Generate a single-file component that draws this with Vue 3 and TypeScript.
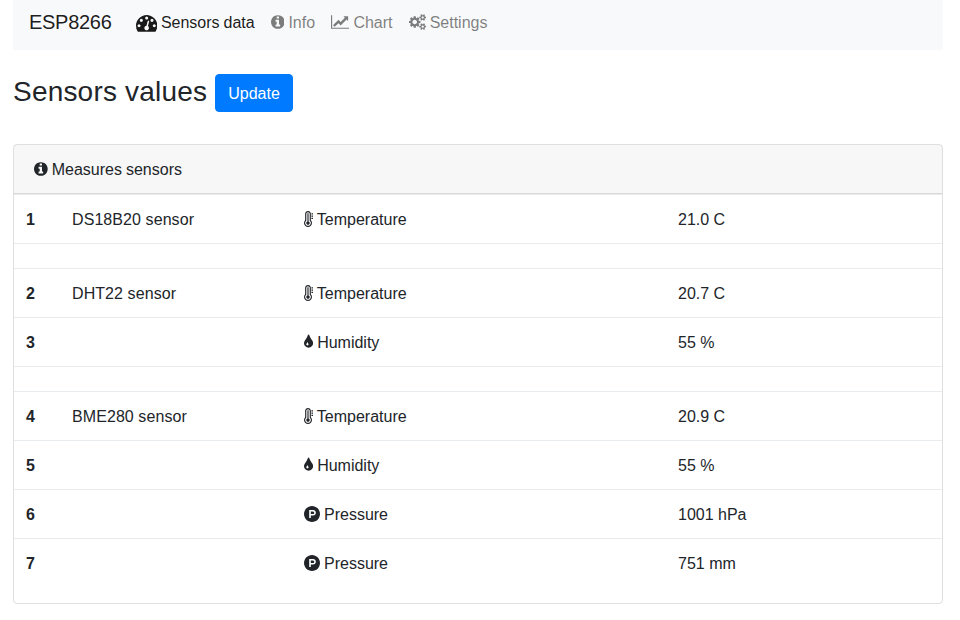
<script setup lang="ts">
interface Icon {
  width: number
  path: string
}

interface Row {
  index?: number
  sensor?: string
  icon?: string
  measure?: string
  value?: string
}

const icons: Record<string, Icon> = {
  tachometer: {
    width: 1792,
    path: 'M384 1152q0-53-37.5-90.5t-90.5-37.5-90.5 37.5-37.5 90.5 37.5 90.5 90.5 37.5 90.5-37.5 37.5-90.5zm192-448q0-53-37.5-90.5t-90.5-37.5-90.5 37.5-37.5 90.5 37.5 90.5 90.5 37.5 90.5-37.5 37.5-90.5zm428 481l101-382q6-26-7.5-48.5t-38.5-29.5-48 6.5-30 39.5l-101 382q-60 5-107 43.5t-63 98.5q-20 77 20 146t117 89 146-20 89-117q16-60-6-117t-72-91zm660-33q0-53-37.5-90.5t-90.5-37.5-90.5 37.5-37.5 90.5 37.5 90.5 90.5 37.5 90.5-37.5 37.5-90.5zm-640-640q0-53-37.5-90.5t-90.5-37.5-90.5 37.5-37.5 90.5 37.5 90.5 90.5 37.5 90.5-37.5 37.5-90.5zm448 192q0-53-37.5-90.5t-90.5-37.5-90.5 37.5-37.5 90.5 37.5 90.5 90.5 37.5 90.5-37.5 37.5-90.5zm320 448q0 261-141 483-19 29-54 29h-1402q-35 0-54-29-141-221-141-483 0-182 71-348t191-286 286-191 348-71 348 71 286 191 191 286 71 348z',
  },
  info: {
    width: 1536,
    path: 'M1024 1376v-160q0-14-9-23t-23-9h-96v-512q0-14-9-23t-23-9h-320q-14 0-23 9t-9 23v160q0 14 9 23t23 9h96v320h-96q-14 0-23 9t-9 23v160q0 14 9 23t23 9h448q14 0 23-9t9-23zm-128-896v-160q0-14-9-23t-23-9h-192q-14 0-23 9t-9 23v160q0 14 9 23t23 9h192q14 0 23-9t9-23zm640 416q0 209-103 385.5t-279.5 279.5-385.5 103-385.5-103-279.5-279.5-103-385.5 103-385.5 279.5-279.5 385.5-103 385.5 103 279.5 279.5 103 385.5z',
  },
  chart: {
    width: 2048,
    path: 'M2048 1536v128h-2048v-1536h128v1408h1920zm-128-1248v435q0 21-19.5 29.5t-35.5-7.5l-121-121-633 633q-10 10-23 10t-23-10l-233-233-416 416-192-192 585-585q10-10 23-10t23 10l233 233 464-464-121-121q-16-16-7.5-35.5t29.5-19.5h435q14 0 23 9t9 23z',
  },
  cogs: {
    width: 1920,
    path: 'M896 896q0-106-75-181t-181-75-181 75-75 181 75 181 181 75 181-75 75-181zm768 512q0-52-38-90t-90-38-90 38-38 90q0 53 37.5 90.5t90.5 37.5 90.5-37.5 37.5-90.5zm0-1024q0-52-38-90t-90-38-90 38-38 90q0 53 37.5 90.5t90.5 37.5 90.5-37.5 37.5-90.5zm-384 421v185q0 10-7 19.5t-16 10.5l-155 24q-11 35-32 76 34 48 90 115 7 11 7 20 0 12-7 19-23 30-82.5 89.5t-78.5 59.5q-11 0-21-7l-115-90q-37 19-77 31-11 108-23 155-7 24-30 24h-186q-11 0-20-7.5t-10-17.5l-23-153q-34-10-75-31l-118 89q-7 7-20 7-11 0-21-8-144-133-144-160 0-9 7-19 10-14 41-53t47-61q-23-44-35-82l-152-24q-10-1-17-9.5t-7-19.5v-185q0-10 7-19.5t16-10.5l155-24q11-35 32-76-34-48-90-115-7-11-7-20 0-12 7-20 22-30 82-89t79-59q11 0 21 7l115 90q34-18 77-32 11-108 23-154 7-24 30-24h186q11 0 20 7.5t10 17.5l23 153q34 10 75 31l118-89q8-7 20-7 11 0 21 8 144 133 144 160 0 8-7 19-12 16-42 54t-45 60q23 48 34 82l152 23q10 2 17 10.5t7 19.5zm640 533v140q0 16-149 31-12 27-30 52 51 113 51 138 0 4-4 7-122 71-124 71-8 0-46-47t-52-68q-20 2-30 2t-30-2q-14 21-52 68t-46 47q-2 0-124-71-4-3-4-7 0-25 51-138-18-25-30-52-149-15-149-31v-140q0-16 149-31 13-29 30-52-51-113-51-138 0-4 4-7 4-2 35-20t59-34 30-16q8 0 46 46.5t52 67.5q20-2 30-2t30 2q51-71 92-112l6-2q4 0 124 70 4 3 4 7 0 25-51 138 17 23 30 52 149 15 149 31zm0-1024v140q0 16-149 31-12 27-30 52 51 113 51 138 0 4-4 7-122 71-124 71-8 0-46-47t-52-68q-20 2-30 2t-30-2q-14 21-52 68t-46 47q-2 0-124-71-4-3-4-7 0-25 51-138-18-25-30-52-149-15-149-31v-140q0-16 149-31 13-29 30-52-51-113-51-138 0-4 4-7 4-2 35-20t59-34 30-16q8 0 46 46.5t52 67.5q20-2 30-2t30 2q51-71 92-112l6-2q4 0 124 70 4 3 4 7 0 25-51 138 17 23 30 52 149 15 149 31z',
  },
  thermometer: {
    width: 1024,
    path: 'M640 1344q0 80-56 136t-136 56-136-56-56-136q0-60 35-110t93-71v-907h128v907q58 21 93 71t35 110zm128 0q0-77-34-144t-94-112v-768q0-80-56-136t-136-56-136 56-56 136v768q-60 45-94 112t-34 144q0 133 93.5 226.5t226.5 93.5 226.5-93.5 93.5-226.5zm128 0q0 185-131.5 316.5t-316.5 131.5-316.5-131.5-131.5-316.5q0-182 128-313v-711q0-133 93.5-226.5t226.5-93.5 226.5 93.5 93.5 226.5v711q128 131 128 313zm128-576v128h-192v-128h192zm0-256v128h-192v-128h192zm0-256v128h-192v-128h192z',
  },
  tint: {
    width: 1024,
    path: 'M512 1152q0-36-20-69-1-1-15.5-22.5t-25.5-38-25-44-21-50.5q-4-16-21-16t-21 16q-7 23-21 50.5t-25 44-25.5 38-15.5 22.5q-20 33-20 69 0 53 37.5 90.5t90.5 37.5 90.5-37.5 37.5-90.5zm512-128q0 212-150 362t-362 150-362-150-150-362q0-145 81-275 6-9 62.5-90.5t101-151 99.5-178 83-201.5q9-30 34-47t51-17 51.5 17 33.5 47q28 93 83 201.5t99.5 178 101 151 62.5 90.5q81 127 81 275z',
  },
  pressure: {
    width: 1792,
    path: 'M1150 762q0 56-39.5 95t-95.5 39h-253v-269h253q56 0 95.5 39.5t39.5 95.5zm179 0q0-130-91.5-222t-222.5-92h-433v896h180v-269h253q130 0 222-91.5t92-221.5zm463 134q0 182-71 348t-191 286-286 191-348 71-348-71-286-191-191-286-71-348 71-348 191-286 286-191 348-71 348 71 286 191 191 286 71 348z',
  },
}

const links = [
  { label: 'Sensors data', icon: 'tachometer', active: true },
  { label: 'Info', icon: 'info', active: false },
  { label: 'Chart', icon: 'chart', active: false },
  { label: 'Settings', icon: 'cogs', active: false },
]

const rows: Row[] = [
  { index: 1, sensor: 'DS18B20 sensor', icon: 'thermometer', measure: 'Temperature', value: '21.0 C' },
  {},
  { index: 2, sensor: 'DHT22 sensor', icon: 'thermometer', measure: 'Temperature', value: '20.7 C' },
  { index: 3, icon: 'tint', measure: 'Humidity', value: '55 %' },
  {},
  { index: 4, sensor: 'BME280 sensor', icon: 'thermometer', measure: 'Temperature', value: '20.9 C' },
  { index: 5, icon: 'tint', measure: 'Humidity', value: '55 %' },
  { index: 6, icon: 'pressure', measure: 'Pressure', value: '1001 hPa' },
  { index: 7, icon: 'pressure', measure: 'Pressure', value: '751 mm' },
]

const box = (name: string) => `0 0 ${icons[name].width} 1792`
</script>

<template>
  <div class="container">
    <nav class="navbar">
      <a class="brand">ESP8266</a>
      <a v-for="link in links" :key="link.label" class="link" :class="{ active: link.active }">
        <svg class="icon" :class="{ large: link.active }" :viewBox="box(link.icon)"><path :d="icons[link.icon].path" /></svg>
        {{ link.label }}
      </a>
    </nav>

    <header class="heading">
      <h3>Sensors values</h3>
      <button type="button">Update</button>
    </header>

    <section class="card">
      <div class="card-header">
        <svg class="icon" :viewBox="box('info')"><path :d="icons.info.path" /></svg>
        Measures sensors
      </div>
      <table>
        <colgroup>
          <col class="col-index" />
          <col class="col-sensor" />
          <col class="col-measure" />
          <col />
        </colgroup>
        <tbody>
          <tr v-for="(row, i) in rows" :key="i">
            <th>{{ row.index }}</th>
            <td class="sensor">{{ row.sensor }}</td>
            <td class="measure">
              <template v-if="row.icon">
                <svg class="icon" :viewBox="box(row.icon)"><path :d="icons[row.icon].path" /></svg>
                {{ row.measure }}
              </template>
            </td>
            <td>{{ row.value }}</td>
          </tr>
        </tbody>
      </table>
    </section>
  </div>
</template>

<style>
body {
  margin: 0;
  background: #fff;
}
</style>

<style scoped>
.container {
  box-sizing: border-box;
  width: 960px;
  height: 620px;
  padding: 0 17px 0 13px;
  overflow: hidden;
  color: #212529;
  font: 16px/24px "Liberation Sans", Arial, sans-serif;
}

.navbar {
  display: flex;
  box-sizing: border-box;
  height: 50px;
  padding: 2px 16px 8px;
  align-items: center;
  background: #f8f9fa;
}

.brand {
  margin-right: 16px;
  color: rgba(0, 0, 0, 0.9);
  font-size: 20px;
  letter-spacing: -0.28px;
  line-height: 30px;
}

.link {
  padding: 5px 8px 3px;
  color: rgba(0, 0, 0, 0.5);
  word-spacing: -0.45px;
}

.link.active {
  color: rgba(0, 0, 0, 0.9);
}

.icon {
  height: 16px;
  vertical-align: -2px;
  fill: currentColor;
}

.icon.large {
  height: 21.33px;
  margin: -4px 0;
  vertical-align: -1px;
}

.heading {
  display: flex;
  gap: 8px;
  padding: 24px 0 32px;
}

h3 {
  margin: 0;
  font-size: 28px;
  font-weight: 400;
  letter-spacing: 0.2px;
  line-height: 36px;
}

button {
  padding: 7px 12px 5px;
  border: 1px solid #007bff;
  border-radius: 4px;
  background: #007bff;
  color: #fff;
  font: inherit;
}

.card {
  box-sizing: border-box;
  height: 460px;
  border: 1px solid rgba(0, 0, 0, 0.125);
  border-radius: 4px;
}

.card-header {
  padding: 13px 20px 11px;
  border-bottom: 1px solid rgba(0, 0, 0, 0.125);
  background: rgba(0, 0, 0, 0.03);
  word-spacing: -0.45px;
}

table {
  width: 100%;
  table-layout: fixed;
  border-spacing: 0;
}

.col-index {
  width: 46px;
}

.col-sensor {
  width: 232px;
}

.col-measure {
  width: 374px;
}

th,
td {
  padding: 13px 12px 11px;
  border-top: 1px solid #e9ecef;
  text-align: left;
  vertical-align: top;
}

.sensor {
  letter-spacing: 0.08px;
}

.measure {
  word-spacing: -0.45px;
}
</style>
